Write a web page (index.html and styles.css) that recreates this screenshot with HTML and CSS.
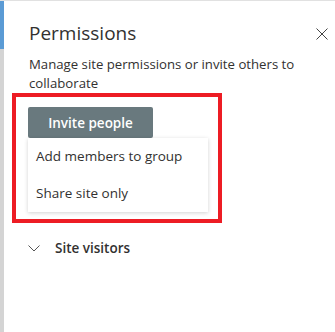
FILE: index.html
```html
<!DOCTYPE html>
<html lang="en">
<head>
    <meta charset="UTF-8">
    <title>Permissions</title>
    <link rel="stylesheet" href="styles.css">
</head>
<body>
    <div class="rail"><div class="rail-accent"></div></div>
    <div class="panel">
        <div class="header">
            <h1 class="title">Permissions</h1>
            <button class="close" aria-label="Close">
                <svg width="12" height="12" viewBox="0 0 12 12"><path d="M0.5 0.5 L11.5 11.5 M11.5 0.5 L0.5 11.5" stroke="#444" stroke-width="1" fill="none"/></svg>
            </button>
        </div>
        <p class="desc">Manage site permissions or invite others to collaborate</p>
        <div class="highlight">
            <button class="invite">Invite people</button>
            <div class="menu">
                <div class="menu-item">Add members to group</div>
                <div class="menu-item">Share site only</div>
            </div>
        </div>
        <div class="section">
            <svg class="chevron" width="12" height="7" viewBox="0 0 12 7"><path d="M0.5 0.5 L6 6 L11.5 0.5" stroke="#555" stroke-width="1" fill="none"/></svg>
            <span class="section-title">Site visitors</span>
        </div>
    </div>
</body>
</html>
```

FILE: styles.css
```css
body {
    margin: 0;
    height: 100vh;
    display: flex;
    font-family: "Open Sans", "Noto Sans", sans-serif;
    color: #323130;
    background: #fff;
    border-top: 1px solid #e1e1e1;
    box-sizing: border-box;
    overflow: hidden;
}

.rail {
    width: 4px;
    background: #d4d4d4;
}

.rail-accent {
    height: 48px;
    background: #5b9bd5;
}

.panel {
    flex: 1;
    padding: 0 7px 0 8px;
}

.header {
    display: flex;
    justify-content: space-between;
    align-items: flex-start;
    padding: 18px 0 0 17px;
}

.title {
    margin: 0;
    font-size: 19px;
    font-weight: 400;
    line-height: 28px;
}

.close {
    border: none;
    background: none;
    padding: 0;
    margin-top: 9px;
    width: 12px;
    height: 12px;
    display: flex;
}

.desc {
    margin: 8px 0 0 17px;
    font-size: 13.2px;
    line-height: 19px;
    max-width: 275px;
}

.highlight {
    width: 210px;
    box-sizing: border-box;
    border: 4px solid #ed1c24;
    padding: 10px 10px 7px 12px;
}

.invite {
    display: block;
    width: 125px;
    height: 31px;
    border: none;
    border-radius: 2px;
    background: #69797e;
    color: #fff;
    font-family: inherit;
    font-size: 13.5px;
    font-weight: 600;
}

.menu {
    box-shadow: 0 1px 4px rgba(0, 0, 0, 0.18);
    background: #fff;
}

.menu-item {
    height: 37px;
    line-height: 37px;
    padding-left: 8px;
    font-size: 13.5px;
    color: #323130;
}

.section {
    display: flex;
    align-items: center;
    gap: 15px;
    padding: 15px 0 0 16px;
}

.section-title {
    font-size: 13.5px;
    font-weight: 600;
    line-height: 20px;
}
```
